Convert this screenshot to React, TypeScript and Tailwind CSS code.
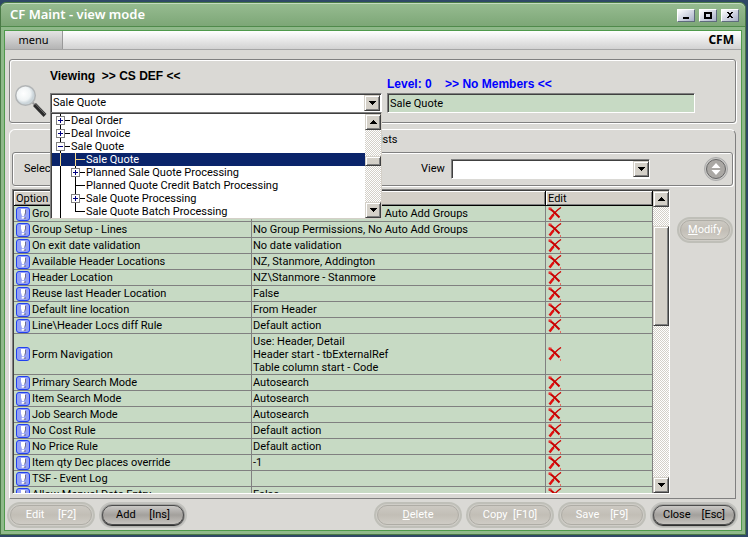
import type { ReactNode } from "react";

type Row = { option: string; value: string[] };
type TreeItem = { label: string; depth: 0 | 1; toggle?: "plus" | "minus"; selected?: boolean; last?: boolean };

const rows: Row[] = [
  { option: "Group Setup - Header", value: ["No Group Permissions, No Auto Add Groups"] },
  { option: "Group Setup - Lines", value: ["No Group Permissions, No Auto Add Groups"] },
  { option: "On exit date validation", value: ["No date validation"] },
  { option: "Available Header Locations", value: ["NZ, Stanmore, Addington"] },
  { option: "Header Location", value: ["NZ\\Stanmore - Stanmore"] },
  { option: "Reuse last Header Location", value: ["False"] },
  { option: "Default line location", value: ["From Header"] },
  { option: "Line\\Header Locs diff Rule", value: ["Default action"] },
  {
    option: "Form Navigation",
    value: ["Use: Header, Detail", "Header start - tbExternalRef", "Table column start - Code"],
  },
  { option: "Primary Search Mode", value: ["Autosearch"] },
  { option: "Item Search Mode", value: ["Autosearch"] },
  { option: "Job Search Mode", value: ["Autosearch"] },
  { option: "No Cost Rule", value: ["Default action"] },
  { option: "No Price Rule", value: ["Default action"] },
  { option: "Item qty Dec places override", value: ["-1"] },
  { option: "TSF - Event Log", value: [""] },
  { option: "Allow Manual Date Entry", value: ["False"] },
];

const tree: TreeItem[] = [
  { label: "Deal Order", depth: 0, toggle: "plus" },
  { label: "Deal Invoice", depth: 0, toggle: "plus" },
  { label: "Sale Quote", depth: 0, toggle: "minus" },
  { label: "Sale Quote", depth: 1, selected: true },
  { label: "Planned Sale Quote Processing", depth: 1, toggle: "plus" },
  { label: "Planned Quote Credit Batch Processing", depth: 1 },
  { label: "Sale Quote Processing", depth: 1, toggle: "plus" },
  { label: "Sale Quote Batch Processing", depth: 1, last: true },
];

const raised =
  "border border-t-[#d4d0c8] border-l-[#d4d0c8] border-r-[#404040] border-b-[#404040] bg-[#d4d0c8] shadow-[inset_1px_1px_0_#fff,inset_-1px_-1px_0_#808080]";
const sunken =
  "border border-t-[#808080] border-l-[#808080] border-r-white border-b-white shadow-[inset_1px_1px_0_#404040]";
const etched = "rounded-[3px] border border-[#808080] shadow-[inset_1px_1px_0_#fff,1px_1px_0_#fff]";

function Arrow({ up = false }: { up?: boolean }) {
  return (
    <svg width="7" height="4" viewBox="0 0 7 4" shapeRendering="crispEdges" aria-hidden="true">
      <path d={up ? "M3 0h1v1h1v1h1v1h1v1H0V3h1V2h1V1h1z" : "M0 0h7v1H6v1H5v1H4v1H3V3H2V2H1V1H0z"} />
    </svg>
  );
}

function ArrowButton({ up, label }: { up?: boolean; label: string }) {
  return (
    <button aria-label={label} className={`flex h-4 w-4 shrink-0 items-center justify-center ${raised}`}>
      <Arrow up={up} />
    </button>
  );
}

function ScrollBar({ before, thumb }: { before: string; thumb: string }) {
  return (
    <div className="flex w-4 shrink-0 flex-col bg-[repeating-conic-gradient(#fff_0_25%,#d4d0c8_0_50%)] bg-[length:2px_2px]">
      <ArrowButton up label="Scroll up" />
      <div className={before} />
      <div className={`${thumb} ${raised}`} />
      <div className="flex-1" />
      <ArrowButton label="Scroll down" />
    </div>
  );
}

function Pill({ children, disabled = false, width = "w-[88px]" }: { children: ReactNode; disabled?: boolean; width?: string }) {
  return (
    <button
      disabled={disabled}
      className={`flex h-[26px] rounded-full border-2 p-px ${width} ${
        disabled ? "border-[#bfbfb8] bg-[#cfcdc7]" : "border-[#c2c2be] bg-[#a5a5a2]"
      }`}
    >
      <span
        className={`flex flex-1 items-center justify-center self-stretch whitespace-pre rounded-full border ${
          disabled
            ? "border-[#aeaca5] bg-linear-to-b from-[#ccc9c2] via-[#c2beb6] to-[#cfccc5] text-white"
            : "border-[#4c4c4c] bg-linear-to-b from-[#c9c8c5] via-[#a3a09c] to-[#c6c3be] text-black shadow-[0_1px_1px_#222]"
        }`}
      >
        {children}
      </span>
    </button>
  );
}

function CaptionButton({ label, children }: { label: string; children: ReactNode }) {
  return (
    <button
      aria-label={label}
      className="flex h-[13px] w-[18px] items-center justify-center border border-t-white border-l-white border-r-[#5e6b7c] border-b-[#5e6b7c] bg-linear-to-br from-white to-[#a7afc6]"
    >
      <svg width="10" height="9" viewBox="0 0 10 9" shapeRendering="crispEdges" aria-hidden="true">
        {children}
      </svg>
    </button>
  );
}

function Magnifier() {
  return (
    <svg width="34" height="34" viewBox="0 0 34 34" aria-hidden="true">
      <defs>
        <radialGradient id="lens" cx="0.4" cy="0.4">
          <stop offset="0" stopColor="#ffffff" />
          <stop offset="0.7" stopColor="#f0f4f5" />
          <stop offset="1" stopColor="#cbd5da" />
        </radialGradient>
      </defs>
      <path d="M18 18l3 3" stroke="#999" strokeWidth="2" />
      <circle cx="11.500" cy="11.500" r="9.800" fill="url(#lens)" stroke="#b2b5b6" strokeWidth="1.500" />
      <path d="M20.500 20.500l10.500 11" stroke="#2b2b2b" strokeWidth="4" />
      <path d="M21.500 20l10 10.500" stroke="#777" strokeWidth="1" />
    </svg>
  );
}

function InfoIcon() {
  return (
    <svg width="14" height="14" viewBox="0 0 14 14" className="shrink-0" aria-hidden="true">
      <rect x="0.500" y="0.500" width="13" height="13" rx="2.500" fill="#94a0f6" stroke="#2040f0" />
      <path d="M8.500 3h1.500v3L9 8.500H8zM8.500 10h1v2H7v-1h1.500z" fill="#6d6d8c" />
      <path d="M5 2h4v3.500L8 9H6L5 5.500z" fill="#fff" />
      <path d="M5.700 9.700h2.600v2H5.700z" fill="#fff" />
    </svg>
  );
}

function CrossIcon() {
  return (
    <svg width="14" height="14" viewBox="0 0 14 14" aria-hidden="true">
      <path d="M13 0.500C9 3 5 7.500 2 12" fill="none" stroke="#d00000" strokeWidth="1.400" />
      <path d="M1.500 12.500l4-5" stroke="#e01010" strokeWidth="2.500" />
      <path d="M1 1.500C4 2.500 8 7 11.500 10.500" fill="none" stroke="#c80000" strokeWidth="2" />
      <path d="M0.500 1.500h3" stroke="#e33" strokeWidth="2" />
      <path d="M12 12.500h1v1h-1z" fill="#f00" />
    </svg>
  );
}

function Branch({ item }: { item: TreeItem }) {
  const line = item.selected ? "#f5d88a" : "#000";
  const x = item.depth === 0 ? 8 : 23;
  return (
    <svg
      width={item.depth === 0 ? 19 : 34}
      height="13"
      viewBox={`0 0 ${item.depth === 0 ? 19 : 34} 13`}
      className="shrink-0"
      shapeRendering="crispEdges"
      aria-hidden="true"
    >
      {item.depth === 1 && <path d="M8.500 0v13" stroke={line} />}
      <path d={item.last ? `M${x + 0.5} 0v7` : `M${x + 0.5} 0v13`} stroke={line} />
      <path d={`M${x} 6.500h10`} stroke={line} />
      {item.toggle && (
        <>
          <rect x={x - 3.5} y="2.500" width="8" height="8" fill="#fff" stroke="#808080" />
          <path d={`M${x - 2} 6.500h5`} stroke="#000080" />
          {item.toggle === "plus" && <path d={`M${x + 0.5} 4v5`} stroke="#000080" />}
        </>
      )}
    </svg>
  );
}

function TreePopup() {
  return (
    <div className="absolute -inset-x-px top-full z-10 flex border border-[#808080] border-r-[#d4d0c8] border-b-[#d4d0c8] bg-white shadow-[inset_1px_1px_0_#404040]">
      <ul role="tree" className="min-w-0 flex-1 pt-px pl-px">
        {tree.map((item, i) => (
          <li
            key={i}
            role="treeitem"
            aria-selected={!!item.selected}
            className={`flex h-[13px] items-center leading-[13px] ${item.selected ? "bg-[#0a246a] text-white" : ""}`}
          >
            <Branch item={item} />
            {item.label}
          </li>
        ))}
      </ul>
      <div className="flex pt-px">
        <ScrollBar before="h-[26px]" thumb="h-2.5" />
      </div>
    </div>
  );
}

function OptionsTable() {
  const cell = "border-r border-b border-[#808080] p-0";
  const head =
    "h-[15px] border-r border-b border-black bg-[#d4d0c8] p-0 pl-0.5 text-left font-normal leading-[13px] shadow-[inset_1px_1px_0_#fff,inset_-1px_-1px_0_#808080]";
  return (
    <div className={`flex min-h-0 min-w-0 flex-1 bg-[#c7dac4] pt-px pl-px ${sunken}`}>
      <div className="min-w-0 flex-1 overflow-hidden">
        <table className="w-full table-fixed border-separate border-spacing-0">
          <colgroup>
            <col className="w-[238px]" />
            <col className="w-[294px]" />
            <col />
          </colgroup>
          <thead>
            <tr>
              <th className={head}>Option</th>
              <th className={head}>Value</th>
              <th className={head}>Edit</th>
            </tr>
          </thead>
          <tbody>
            {rows.map((row) => (
              <tr key={row.option}>
                <td className={cell}>
                  <div className="flex min-h-[15px] items-center gap-0.5 pl-0.5 leading-[15px]">
                    <InfoIcon />
                    {row.option}
                  </div>
                </td>
                <td className={cell}>
                  <div className={row.value.length > 1 ? "pt-px pl-px leading-[13px]" : "min-h-[15px] pl-px leading-[15px]"}>
                    {row.value.map((line) => (
                      <div key={line}>{line}</div>
                    ))}
                  </div>
                </td>
                <td className={cell}>
                  <button aria-label={`Clear ${row.option}`} className="flex pl-0.5">
                    <CrossIcon />
                  </button>
                </td>
              </tr>
            ))}
          </tbody>
        </table>
      </div>
      <ScrollBar before="h-[19px]" thumb="h-[100px]" />
    </div>
  );
}

export default function App() {
  return (
    <div className="h-screen min-h-[400px] bg-[#2f4866] pt-0.5 pr-0.5 pb-0.5 font-[Roboto,'Liberation_Sans',sans-serif] text-[11px] text-black">
      <div className="flex h-full flex-col rounded-t-md border border-[#4a7a46] bg-[#8fb98a] px-[3px] pb-[3px]">
        <header className="-mx-[3px] flex h-6 shrink-0 items-center justify-between rounded-t-md border-t border-b border-t-[#c4dcc0] border-b-[#4f8a4b] bg-linear-to-b from-[#96bb90] to-[#7da777] pr-1.5 pl-[9px]">
          <h1 className="font-['Noto_Sans',sans-serif] text-[13px] font-semibold text-white">CF Maint - view mode</h1>
          <div className="flex gap-1">
            <CaptionButton label="Minimize">
              <path d="M2 6h6v2H2z" />
            </CaptionButton>
            <CaptionButton label="Maximize">
              <path fillRule="evenodd" d="M1 1h8v7H1zM3 3v3h4V3z" />
            </CaptionButton>
            <CaptionButton label="Close">
              <path d="M2 1h2v1h2V1h2v1H7v1H6v2h1v1h1v1H6V6H4v1H2V6h1V5h1V3H3V2H2z" />
            </CaptionButton>
          </div>
        </header>

        <div className="mt-[3px] flex min-h-0 flex-1 flex-col border border-[#4f9a4b] bg-[#dad9d5]">
          <nav className="flex h-[19px] shrink-0 items-stretch justify-between border-b border-[#a5a5a5] bg-linear-to-b from-white to-[#d2d2d2] font-['Noto_Sans',sans-serif]">
            <button className="w-[58px] border-r border-[#999] bg-linear-to-b from-[#e4e4e4] to-[#b4b4b4] leading-4">menu</button>
            <strong className="pr-[7px] text-[12px] leading-[18px]">CFM</strong>
          </nav>

          <main className="flex min-h-0 flex-1 flex-col pt-[9px] pr-[5px] pl-1">
            <section className={`flex h-16 shrink-0 ${etched}`}>
              <div className="w-10 shrink-0 pt-6 pl-1">
                <Magnifier />
              </div>
              <div className="w-[332px] shrink-0 pt-2">
                <label
                  htmlFor="level"
                  className="block h-[25px] whitespace-pre font-['Liberation_Sans',sans-serif] text-[12px] font-bold leading-4"
                >
                  {"Viewing  >> CS DEF <<"}
                </label>
                <div className={`relative flex h-5 bg-white py-px pr-px pl-0.5 ${sunken}`}>
                  <input id="level" defaultValue="Sale Quote" className="min-w-0 flex-1 outline-none" />
                  <ArrowButton label="Open list" />
                  <TreePopup />
                </div>
              </div>
              <div className="min-w-0 flex-1 pt-4 pr-10 pl-[5px]">
                <label
                  htmlFor="members"
                  className="block h-[17px] whitespace-pre font-['Liberation_Sans',sans-serif] text-[12px] font-bold leading-4 text-[#0000ff]"
                >
                  {"Level: 0    >> No Members <<"}
                </label>
                <input
                  id="members"
                  readOnly
                  defaultValue="Sale Quote"
                  className={`block h-5 w-full bg-[#c7dac4] pl-0.5 outline-none ${sunken}`}
                />
              </div>
            </section>

            <section className="mt-1.5 flex min-h-0 flex-1 flex-col rounded-t-md border border-t-white border-l-white border-r-[#808080] border-b-[#808080] px-0.5 pb-1">
              <h2 className="h-[22px] shrink-0 text-center leading-5">View Lists</h2>
              <div className={`flex h-[34px] shrink-0 items-center ${etched}`}>
                <span className="w-[408px] shrink-0 pl-[11px]">Selection</span>
                <label htmlFor="view" className="w-[30px] shrink-0">
                  View
                </label>
                <div className="grid w-[199px] items-center">
                  <select id="view" className={`col-start-1 row-start-1 h-5 appearance-none bg-white ${sunken}`} />
                  <span className={`pointer-events-none col-start-1 row-start-1 mr-px flex h-4 w-4 items-center justify-center justify-self-end ${raised}`}>
                    <Arrow />
                  </span>
                </div>
                <button aria-label="Toggle" className="mr-1 ml-auto">
                  <svg width="24" height="24" viewBox="0 0 24 24" aria-hidden="true">
                    <circle cx="12" cy="12" r="11.500" fill="#c9c9c6" stroke="#aaa" />
                    <circle cx="12" cy="12" r="9.500" fill="#aaa8a4" stroke="#666" />
                    <path d="M12 6l4.500 5h-9zM12 18l4.500-5h-9z" fill="#fff" />
                  </svg>
                </button>
              </div>
              <div className="mt-[3px] flex min-h-0 flex-1">
                <OptionsTable />
                <div className="w-[63px] shrink-0 pt-7 pl-[7px]">
                  <Pill disabled width="w-14">
                    <span>
                      <u>M</u>odify
                    </span>
                  </Pill>
                </div>
              </div>
            </section>
          </main>

          <footer className="flex shrink-0 gap-1 pt-[3px] pr-[3px] pb-0.5 pl-0.5">
            <Pill disabled>{"Edit     [F2]"}</Pill>
            <Pill>{"Add     [Ins]"}</Pill>
            <div className="flex-1" />
            <Pill disabled>
              <span>
                <u>D</u>elete
              </span>
            </Pill>
            <Pill disabled>{"Copy  [F10]"}</Pill>
            <Pill disabled>{"Save    [F9]"}</Pill>
            <Pill>{"Close    [Esc]"}</Pill>
          </footer>
        </div>
      </div>
    </div>
  );
}
